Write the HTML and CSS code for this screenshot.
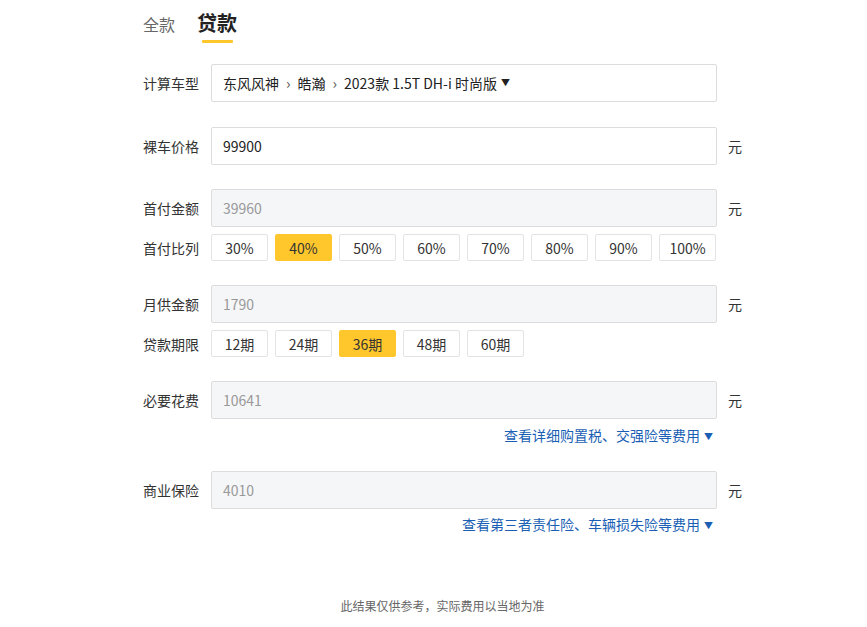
FILE: index.html
```html
<!DOCTYPE html>
<html lang="zh">
<head>
<meta charset="utf-8">
<link rel="stylesheet" href="styles.css">
</head>
<body>
<div class="page">
  <div class="tabs">
    <span class="tab">全款</span>
    <span class="tab active">贷款</span>
  </div>
  <div class="form">
    <div class="row first">
      <span class="label">计算车型</span>
      <div class="box"><span class="crumb">东风风神</span><span class="sep">›</span><span class="crumb">皓瀚</span><span class="sep">›</span><span class="crumb">2023款 1.5T DH-i 时尚版</span><span class="caret">▼</span></div>
    </div>
    <div class="row">
      <span class="label">裸车价格</span>
      <div class="box">99900</div>
      <span class="unit">元</span>
    </div>
    <div class="row">
      <span class="label">首付金额</span>
      <div class="box ro">39960</div>
      <span class="unit">元</span>
    </div>
    <div class="row sub">
      <span class="label">首付比列</span>
      <div class="opts">
        <span class="opt">30%</span><span class="opt on">40%</span><span class="opt">50%</span><span class="opt">60%</span><span class="opt">70%</span><span class="opt">80%</span><span class="opt">90%</span><span class="opt">100%</span>
      </div>
    </div>
    <div class="row">
      <span class="label">月供金额</span>
      <div class="box ro">1790</div>
      <span class="unit">元</span>
    </div>
    <div class="row sub">
      <span class="label">贷款期限</span>
      <div class="opts">
        <span class="opt">12期</span><span class="opt">24期</span><span class="opt on">36期</span><span class="opt">48期</span><span class="opt">60期</span>
      </div>
    </div>
    <div class="row">
      <span class="label">必要花费</span>
      <div class="box ro">10641</div>
      <span class="unit">元</span>
    </div>
    <div class="link">查看详细购置税、交强险等费用<span class="tri">▼</span></div>
    <div class="row">
      <span class="label">商业保险</span>
      <div class="box ro">4010</div>
      <span class="unit">元</span>
    </div>
    <div class="link last">查看第三者责任险、车辆损失险等费用<span class="tri">▼</span></div>
  </div>
  <div class="note">此结果仅供参考，实际费用以当地为准</div>
</div>
</body>
</html>
```
FILE: styles.css
```css
* { box-sizing: border-box; }
body {
  margin: 0;
  background: #fff;
  font-family: "Noto Sans CJK SC", "Noto Sans", sans-serif;
  color: #333;
}
.page {
  width: 867px;
  padding-top: 10px;
}
.tabs {
  display: flex;
  align-items: center;
  gap: 22px;
  padding-left: 143px;
  height: 28px;
}
.tab {
  font-size: 16px;
  color: #666;
  line-height: 28px;
}
.tab.active {
  font-size: 20px;
  font-weight: bold;
  color: #222;
  position: relative;
  line-height: 28px;
  top: -1px;
}
.tab.active::after {
  content: "";
  position: absolute;
  left: 5px;
  right: 4px;
  top: 31px;
  height: 3px;
  background: #ffc72c;
  border-radius: 1px;
}
.form {
  margin-top: 26px;
  padding-left: 143px;
}
.row {
  display: flex;
  align-items: center;
  margin-bottom: 24px;
}
.row.first { margin-bottom: 25px; }
.label {
  width: 68px;
  font-size: 14px;
  line-height: 20px;
  color: #333;
}
.box {
  width: 506px;
  height: 38px;
  border: 1px solid #dcdcdc;
  border-radius: 2px;
  padding-left: 11px;
  display: flex;
  align-items: center;
  font-size: 14px;
  line-height: 20px;
  color: #222;
}
.box.ro {
  background: #f5f6f8;
  color: #999;
}
.sep { color: #555; margin: 0 7px; font-size: 15px; }
.caret { font-size: 9px; margin-left: 4px; color: #222; }
.unit {
  margin-left: 11px;
  font-size: 14px;
  line-height: 20px;
  color: #333;
}
.row:has(+ .sub) { margin-bottom: 7px; }
.row.sub { margin-bottom: 24px; }
.opts {
  display: flex;
  gap: 7px;
}
.opt {
  width: 57px;
  height: 27px;
  border: 1px solid #e3e3e3;
  border-radius: 2px;
  display: flex;
  align-items: center;
  justify-content: center;
  font-size: 14px;
  line-height: 20px;
  color: #333;
}
.opt.on {
  background: #ffc72c;
  border-color: #ffc72c;
}
.row:has(+ .link) { margin-bottom: 6px; }
.link {
  width: 574px;
  height: 20px;
  overflow: visible;
  text-align: right;
  font-size: 14px;
  color: #1a5fb4;
  padding-right: 4px;
  margin-bottom: 26px;
  line-height: 20px;
}
.link.last { margin-top: -1px; margin-bottom: 0; }
.tri { display: inline-block; line-height: 10px; font-size: 9px; margin-left: 4px; vertical-align: 1px; }
.note {
  margin-top: 63px;
  text-align: center;
  padding-left: 18px;
  font-size: 12px;
  line-height: 17px;
  color: #666;
}
```
